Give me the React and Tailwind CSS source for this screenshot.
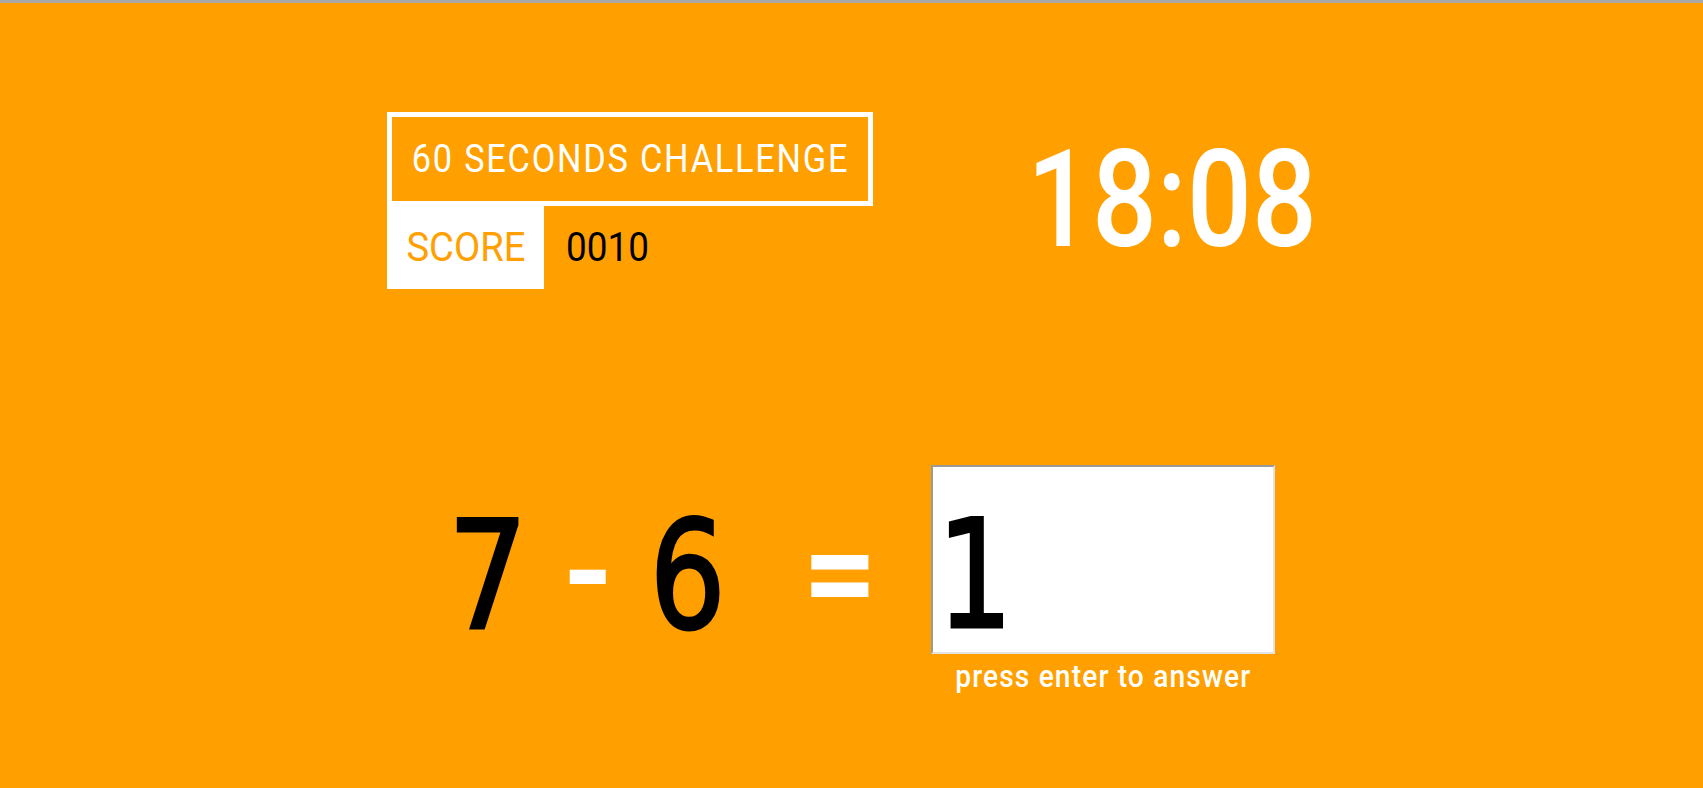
import React from 'react';

const condensed = '"Roboto", "Liberation Sans", sans-serif';
const digits = '"DejaVu Sans", "Liberation Sans", sans-serif';

function ScoreBoard({ score }) {
    return (
        <div className="w-[486px]">
            <div className="h-[94px] border-[5px] border-white flex items-center justify-center">
                <span className="inline-block text-[39px] leading-none tracking-[2px] text-white scale-x-[0.88] whitespace-nowrap" style={{ fontFamily: condensed }}>
                    60 SECONDS CHALLENGE
                </span>
            </div>
            <div className="flex h-[83px]">
                <div className="w-[157px] bg-white flex items-center justify-center">
                    <span className="inline-block text-[41px] leading-none text-[#ff9f00] scale-x-[0.93]" style={{ fontFamily: condensed }}>
                        SCORE
                    </span>
                </div>
                <div className="pl-[22px] flex items-center">
                    <span className="inline-block text-[41px] leading-none text-black origin-left scale-x-[0.9]" style={{ fontFamily: condensed }}>
                        {score}
                    </span>
                </div>
            </div>
        </div>
    );
}

function Glyph({ children, className }) {
    return (
        <div className="w-[100px] flex justify-center">
            <span className={'inline-block leading-none ' + className}>{children}</span>
        </div>
    );
}

export default function App() {
    return (
        <div className="min-h-screen bg-[#ff9f00] border-t-[3px] border-[#a8a8a8] overflow-hidden">
            {/* header: title + score, timer */}
            <div className="flex items-start pt-[109px] pl-[387px]">
                <ScoreBoard score="0010" />
                <div className="ml-[154px] mt-[20px]">
                    <span className="inline-block text-[136px] leading-none font-medium text-white origin-left scale-x-[0.84]" style={{ fontFamily: condensed }}>
                        18:08
                    </span>
                </div>
            </div>

            {/* question */}
            <div className="flex items-start pl-[438px] mt-[176px]">
                <div className="mt-[36px]" style={{ fontFamily: digits }}>
                    <Glyph className="text-[150px] text-black scale-x-[0.84] [-webkit-text-stroke:3px_#000]">7</Glyph>
                </div>
                <div className="mt-[43px] font-bold" style={{ fontFamily: condensed }}>
                    <Glyph className="text-[130px] text-white">-</Glyph>
                </div>
                <div className="mt-[36px]" style={{ fontFamily: digits }}>
                    <Glyph className="text-[150px] text-black scale-x-[0.8] [-webkit-text-stroke:3px_#000]">6</Glyph>
                </div>
                <div className="ml-[52px] mt-[43px] font-bold" style={{ fontFamily: condensed }}>
                    <Glyph className="text-[130px] text-white">=</Glyph>
                </div>
                <div className="ml-[41px] flex flex-col items-center">
                    <div className="w-[344px] h-[189px] bg-white border-2 border-t-[#9a9a9a] border-l-[#9a9a9a] border-b-[#e3e3e3] border-r-[#e3e3e3] pl-[4px] pt-[34px]">
                        <span className="inline-block text-[149px] leading-none text-black origin-left scale-x-[0.8] [-webkit-text-stroke:3px_#000]" style={{ fontFamily: digits }}>1</span>
                    </div>
                    <span className="inline-block mt-[6px] text-[32px] leading-none font-medium tracking-[1.3px] text-white scale-x-[0.88] whitespace-nowrap" style={{ fontFamily: condensed }}>
                        press enter to answer
                    </span>
                </div>
            </div>
        </div>
    );
}
